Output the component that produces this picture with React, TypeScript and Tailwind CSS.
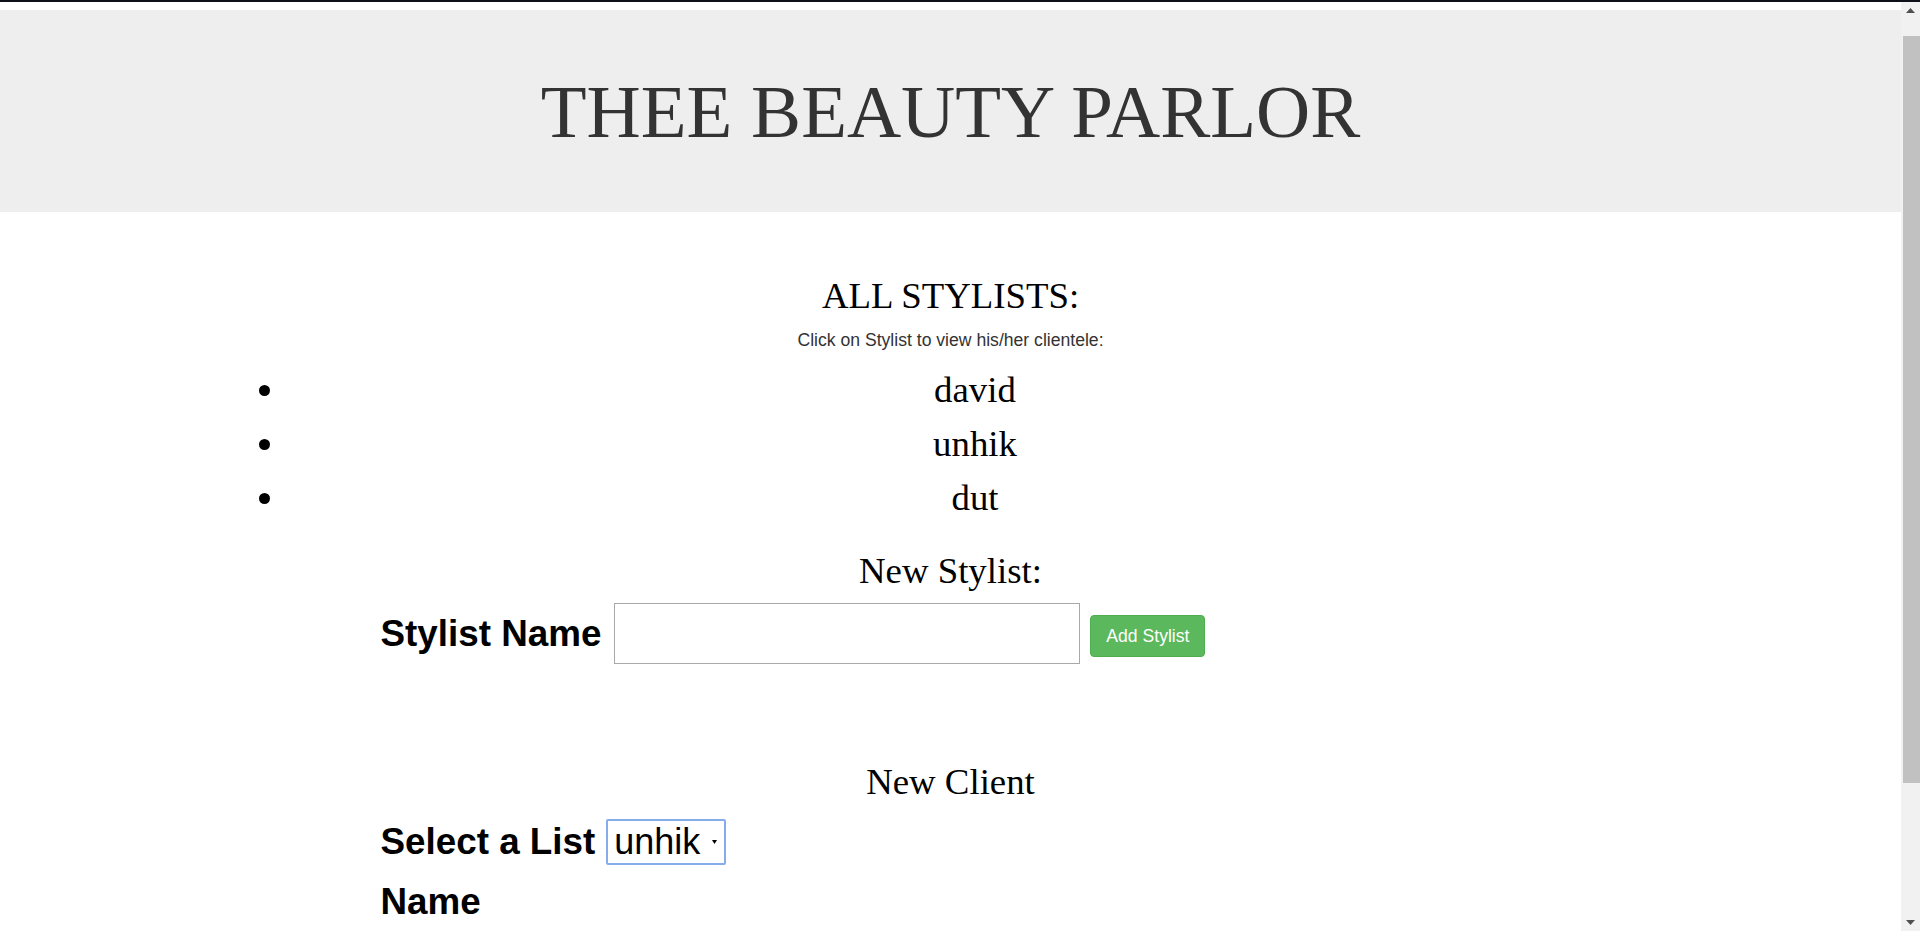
import React from 'react';

const serif = "font-['Liberation_Serif','Times_New_Roman',serif]";
const sans = "font-['Liberation_Sans',Arial,sans-serif]";

const stylists = ['david', 'unhik', 'dut'];

const Scrollbar: React.FC = () => (
  <div className="w-[19px] shrink-0 bg-[#f1f1f1] flex flex-col">
    <div className="h-[17px] flex items-center justify-center">
      <svg width="9" height="5" viewBox="0 0 9 5">
        <path d="M0 5L4.5 0L9 5z" fill="#505050" />
      </svg>
    </div>
    <div className="flex-1">
      <div className="mt-[17px] ml-[2px] h-[747px] bg-[#c1c1c1]" />
    </div>
    <div className="h-[17px] flex items-center justify-center">
      <svg width="9" height="5" viewBox="0 0 9 5">
        <path d="M0 0L4.5 5L9 0z" fill="#505050" />
      </svg>
    </div>
  </div>
);

export default function App() {
  return (
    <div className="h-screen flex flex-col bg-white">
      <div className="h-[2px] shrink-0 bg-[#0d1117]" />
      <div className="flex flex-1 min-h-0">
        <main className={`flex-1 overflow-y-auto [scrollbar-width:none] text-black ${serif}`}>
          {/* jumbotron */}
          <div className="mt-[8px] h-[202px] bg-[#eeeeee] flex items-center justify-center">
            <h1 className="text-[75px] leading-none font-normal text-[#333333]">THEE BEAUTY PARLOR</h1>
          </div>

          <h2 className="mt-[64px] text-center text-[36.8px] leading-[40px] font-normal">ALL STYLISTS:</h2>
          <p className={`mt-[14px] text-center text-[17.6px] leading-[20px] text-[#333333] ${sans}`}>
            Click on Stylist to view his/her clientele:
          </p>

          <ul className="mt-[13px] ml-[248px] mr-[239px] pl-[40px] list-disc">
            {stylists.map((s) => (
              <li key={s} className="text-center text-[36.8px] leading-[54px]">
                <a href="#" className="text-black">{s}</a>
              </li>
            ))}
          </ul>

          <h3 className="mt-[26px] text-center text-[36.8px] leading-[40px] font-normal">New Stylist:</h3>

          <div className="mx-auto w-[1170px] px-[15px]">
            <form className={`mt-[12px] flex items-start ${sans}`} onSubmit={(e) => e.preventDefault()}>
              <label className="text-[36.8px] leading-[61px] font-bold mr-[13px]">Stylist Name</label>
              <input
                type="text"
                className="w-[466px] h-[61px] border border-[#a9a9a9] bg-white px-2 text-[36.8px] outline-none"
              />
              <button
                type="submit"
                className="ml-[10px] mt-[12px] w-[115px] h-[42px] rounded-[4px] border border-[#4cae4c] bg-[#5cb85c] text-white text-[17.6px]"
              >
                Add Stylist
              </button>
            </form>
          </div>

          <h3 className="mt-[98px] text-center text-[36.8px] leading-[40px] font-normal">New Client</h3>

          <div className="mx-auto w-[1170px] px-[15px]">
            <form className={sans} onSubmit={(e) => e.preventDefault()}>
              <div className="mt-[17px] flex items-start">
                <label className="text-[36.8px] leading-[46px] font-bold mr-[11px]">Select a List</label>
                <div className="relative">
                  <select
                    defaultValue="unhik"
                    className="appearance-none w-[120px] h-[46px] border-2 border-[#86acec] rounded-[2px] bg-white pl-[6px] pr-[18px] text-[36px] leading-[42px] outline-none"
                  >
                    {stylists.map((s) => (
                      <option key={s} value={s}>{s}</option>
                    ))}
                  </select>
                  <svg className="absolute right-[9px] top-[21px] pointer-events-none" width="5" height="4" viewBox="0 0 5 4">
                    <path d="M0 0h5L2.5 4z" fill="#000" />
                  </svg>
                </div>
              </div>

              <div className="mt-[14px]">
                <label className="block text-[36.8px] leading-[45px] font-bold">Name</label>
                <input
                  type="text"
                  className="mt-[22px] w-[466px] h-[61px] border border-[#a9a9a9] bg-white px-2 text-[36.8px] outline-none"
                />
              </div>

              <button
                type="submit"
                className="mt-[12px] mb-[60px] w-[108px] h-[42px] rounded-[4px] border border-[#4cae4c] bg-[#5cb85c] text-white text-[17.6px]"
              >
                Add Client
              </button>
            </form>
          </div>
        </main>
        <Scrollbar />
      </div>
    </div>
  );
}
